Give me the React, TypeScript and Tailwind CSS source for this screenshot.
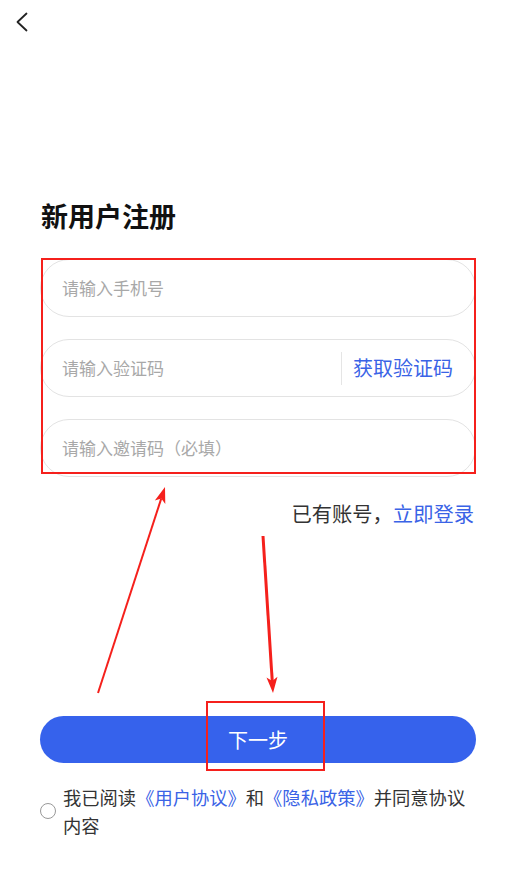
import React from "react";

function Arrow({ x1, y1, x2, y2, w }: { x1: number; y1: number; x2: number; y2: number; w: number }) {
  const dx = x2 - x1;
  const dy = y2 - y1;
  const len = Math.sqrt(dx * dx + dy * dy);
  const ux = dx / len;
  const uy = dy / len;
  const hl = 16;
  const hw = 5.5;
  const bx = x2 - ux * hl;
  const by = y2 - uy * hl;
  const px = -uy;
  const py = ux;
  const pts = `${x2},${y2} ${bx + px * hw},${by + py * hw} ${bx + ux * 4},${by + uy * 4} ${bx - px * hw},${by - py * hw}`;
  return (
    <g>
      <line x1={x1} y1={y1} x2={bx + ux * 4} y2={by + uy * 4} stroke="#f5201c" strokeWidth={w} />
      <polygon points={pts} fill="#f5201c" />
    </g>
  );
}

export default function App() {
  return (
    <div
      className="relative w-[516px] h-[893px] bg-white overflow-hidden"
      style={{ fontFamily: '"Noto Sans CJK SC", "Noto Sans", sans-serif' }}
    >
      <div className="h-[44px] pl-[15px] flex items-center">
        <svg width="14" height="20" viewBox="0 0 14 20" fill="none">
          <path d="M11.5 1.5 L2.5 10 L11.5 18.5" stroke="#222" strokeWidth="1.8" strokeLinecap="round" strokeLinejoin="round" />
        </svg>
      </div>

      <div className="px-10">
        <h1 className="mt-[154px] text-[27px] leading-[36px] font-bold text-[#111] pl-[1px]">新用户注册</h1>

        <div className="mt-[25px] flex flex-col gap-[22px]">
          <div className="h-[58px] rounded-full border border-[#e3e3e3] flex items-center pl-[21px]">
            <span className="text-[17px] text-[#a8a8a8]">请输入手机号</span>
          </div>
          <div className="h-[58px] rounded-full border border-[#e3e3e3] flex items-center pl-[21px] pr-[22px]">
            <span className="flex-1 text-[17px] text-[#a8a8a8]">请输入验证码</span>
            <div className="w-px h-[33px] bg-[#e5e5e5] mr-[11px]" />
            <span className="text-[20px] text-[#3a63e6]">获取验证码</span>
          </div>
          <div className="h-[58px] rounded-full border border-[#e3e3e3] flex items-center pl-[21px]">
            <span className="text-[17px] text-[#a8a8a8]">请输入邀请码（必填）</span>
          </div>
        </div>

        <div className="mt-[21px] flex justify-end pr-[2px]">
          <span className="text-[20.3px] leading-[30px] text-[#333]">
            已有账号，<span className="text-[#3a63e6]">立即登录</span>
          </span>
        </div>

        <button className="mt-[188px] w-full h-[47px] rounded-full bg-[#3662ec] text-white text-[20px] flex items-center justify-center">
          下一步
        </button>

        <div className="mt-[20px] flex items-center">
          <div className="w-[16px] h-[16px] rounded-full border border-[#999] shrink-0" />
          <p className="ml-[7px] w-[406px] text-[18.3px] leading-[28px] text-[#333]">
            我已阅读<span className="text-[#3a63e6]">《用户协议》</span>和<span className="text-[#3a63e6]">《隐私政策》</span>并同意协议内容
          </p>
        </div>
      </div>

      <div className="absolute left-[41px] top-[258px] w-[435px] h-[216px] border-2 border-[#f5201c] pointer-events-none" />
      <div className="absolute left-[206px] top-[701px] w-[119px] h-[70px] border-2 border-[#f5201c] pointer-events-none" />
      <svg className="absolute left-0 top-0 pointer-events-none" width="516" height="893">
        <Arrow x1={98} y1={693} x2={165} y2={487} w={2} />
        <Arrow x1={263} y1={536} x2={273} y2={693} w={3} />
      </svg>
    </div>
  );
}
